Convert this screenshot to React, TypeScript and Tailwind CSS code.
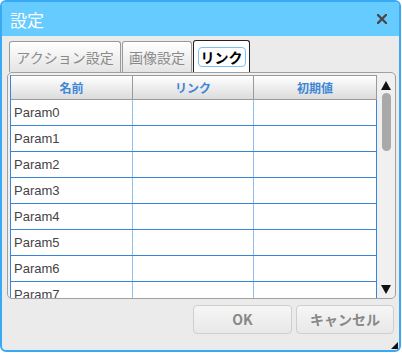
import React from 'react';

const jp = '"Noto Sans CJK JP", "Liberation Sans", sans-serif';
const latin = '"Liberation Sans", "Noto Sans CJK JP", sans-serif';

const params = Array.from({ length: 8 }, (_, i) => `Param${i}`);

export default function App() {
  return (
    <div className="w-[402px] h-[354px] bg-white" style={{ fontFamily: jp }}>
      <div className="w-[401px] h-[352px] border-2 border-[#3aa9f4] rounded-[6px] bg-[#ebebeb] flex flex-col overflow-hidden">
        {/* Title bar */}
        <div className="h-[34px] shrink-0 bg-[#66ccff] flex items-center justify-between pl-2 pr-[12px]">
          <span className="text-white text-[17px] leading-none">設定</span>
          <svg width="10" height="10" viewBox="0 0 10 10">
            <path d="M1 1 L9 9 M9 1 L1 9" stroke="#4a4a4a" strokeWidth="2.4" strokeLinecap="square" />
          </svg>
        </div>

        {/* Body */}
        <div className="flex-1 flex flex-col pl-[5px] pr-[3px] pt-[5px] relative">
          {/* Tabs */}
          <div className="flex h-[31px] pl-[2px] gap-[1px] items-end">
            <div className="h-[31px] w-[112px] border border-b-0 border-[#9a9a9a] rounded-t-[3px] bg-gradient-to-b from-white to-[#e4e4e4] flex items-center justify-center text-[14px] text-[#8a8a8a]">
              アクション設定
            </div>
            <div className="h-[31px] w-[70px] border border-b-0 border-[#9a9a9a] rounded-t-[3px] bg-gradient-to-b from-white to-[#e4e4e4] flex items-center justify-center text-[14px] text-[#8a8a8a]">
              画像設定
            </div>
            <div className="h-[32px] w-[57px] border border-b-0 border-[#222] rounded-t-[3px] bg-white flex items-center justify-center">
              <span className="text-[14px] font-semibold text-black leading-[18px] px-[2px] border border-[#7ec0f2] rounded-[4px]">
                リンク
              </span>
            </div>
          </div>

          {/* Table panel */}
          <div className="h-[227px] border border-[#a0a0a0] rounded-[5px] bg-[#f0f0f0] flex pt-[2px] pl-[2px] overflow-hidden">
            <div className="w-[367px] bg-white border-l border-[#3a84d8] flex flex-col overflow-hidden">
              <div className="h-[25px] shrink-0 flex border border-l-0 border-[#9a9a9a] bg-gradient-to-b from-white to-[#dcdcdc] text-[12px] font-bold text-[#3d86d6]">
                <div className="w-[122px] flex items-center justify-center border-r border-[#9a9a9a]">名前</div>
                <div className="w-[121px] flex items-center justify-center border-r border-[#9a9a9a]">リンク</div>
                <div className="flex-1 flex items-center justify-center">初期値</div>
              </div>
              {params.map((p) => (
                <div key={p} className="h-[26px] shrink-0 flex border-b border-r border-[#3a84d8]">
                  <div
                    className="w-[122px] flex items-center pl-[3px] text-[13px] text-[#444] border-r border-[#8fbdf0]"
                    style={{ fontFamily: latin }}
                  >
                    {p}
                  </div>
                  <div className="w-[121px] border-r border-[#8fbdf0]" />
                  <div className="flex-1" />
                </div>
              ))}
            </div>
            {/* Scrollbar */}
            <div className="w-[18px] flex flex-col items-center pt-[6px] pb-[4px]">
              <svg width="10" height="9" viewBox="0 0 10 9">
                <path d="M5 0 L10 9 L0 9 Z" fill="#111" />
              </svg>
              <div className="w-[9px] h-[58px] mt-[3px] rounded-full bg-[#a9a9a9]" />
              <div className="flex-1" />
              <svg width="10" height="9" viewBox="0 0 10 9">
                <path d="M0 0 L10 0 L5 9 Z" fill="#111" />
              </svg>
            </div>
          </div>

          {/* Buttons */}
          <div className="flex justify-end gap-[4px] mt-[6px] pr-[2px]">
            <button className="w-[99px] h-[29px] border border-[#cfcfcf] rounded-[4px] bg-gradient-to-b from-[#f6f6f6] to-[#e8e8e8] text-[14px] font-bold text-[#888]">
              OK
            </button>
            <button className="w-[98px] h-[29px] border border-[#cfcfcf] rounded-[4px] bg-gradient-to-b from-[#f6f6f6] to-[#e8e8e8] text-[14px] font-bold text-[#888]">
              キャンセル
            </button>
          </div>

          {/* Resize grip */}
          <svg className="absolute right-[1px] bottom-[1px]" width="7" height="7" viewBox="0 0 7 7">
            <path d="M7 0 L7 7 L0 7 Z" fill="#111" />
          </svg>
        </div>
      </div>
    </div>
  );
}
